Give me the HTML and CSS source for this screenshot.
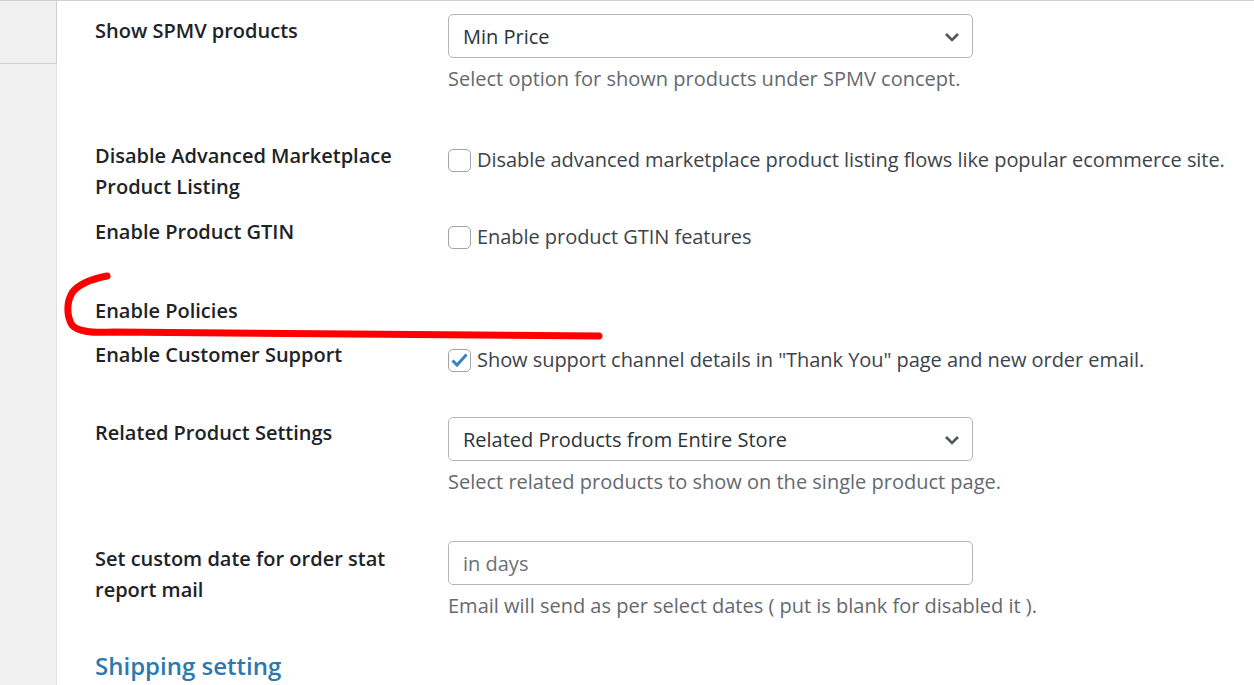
FILE: index.html
```html
<!DOCTYPE html>
<html>
<head>
	<meta charset="utf-8">
	<meta name="viewport" content="width=device-width, initial-scale=1">
	<title>Marketplace settings</title>
	<link rel="stylesheet" href="styles.css">
</head>
<body>
	<div class="page">
		<div class="sidebar">
			<div class="sidebar-tab"></div>
		</div>
		<div class="main">
			<div class="field field-first">
				<div class="field-label label-select">Show SPMV products</div>
				<div class="field-control">
					<div class="select-wrap">
						<select class="select">
							<option>Min Price</option>
						</select>
						<svg class="chevron" width="16" height="10" viewBox="0 0 16 10"><path d="M2 2 L8 8 L14 2" fill="none" stroke="#50575e" stroke-width="2.6"/></svg>
					</div>
					<p class="desc">Select option for shown products under SPMV concept.</p>
				</div>
			</div>

			<div class="field field-wide">
				<div class="field-label label-two">Disable Advanced Marketplace<br>Product Listing</div>
				<div class="field-control control-check">
					<label class="check-row"><span class="check"></span>Disable advanced marketplace product listing flows like popular ecommerce site.</label>
				</div>
			</div>

			<div class="field">
				<div class="field-label">Enable Product GTIN</div>
				<div class="field-control control-check">
					<label class="check-row"><span class="check"></span>Enable product GTIN features</label>
				</div>
			</div>

			<div class="field field-mid">
				<div class="field-label">Enable Policies</div>
				<div class="field-control"></div>
			</div>

			<div class="field field-tight">
				<div class="field-label">Enable Customer Support</div>
				<div class="field-control control-check">
					<label class="check-row"><span class="check is-on"><svg width="19" height="16" viewBox="0 0 19 16"><path d="M2.5 8.5 L7 13 L16.5 2.5" fill="none" stroke="#3582c4" stroke-width="3"/></svg></span>Show support channel details in "Thank You" page and new order email.</label>
				</div>
			</div>

			<div class="field field-after-check">
				<div class="field-label label-select-b">Related Product Settings</div>
				<div class="field-control">
					<div class="select-wrap">
						<select class="select">
							<option>Related Products from Entire Store</option>
						</select>
						<svg class="chevron" width="16" height="10" viewBox="0 0 16 10"><path d="M2 2 L8 8 L14 2" fill="none" stroke="#50575e" stroke-width="2.6"/></svg>
					</div>
					<p class="desc">Select related products to show on the single product page.</p>
				</div>
			</div>

			<div class="field field-last">
				<div class="field-label label-two label-select">Set custom date for order stat<br>report mail</div>
				<div class="field-control">
					<input class="text-input" type="text" placeholder="in days">
					<p class="desc">Email will send as per select dates ( put is blank for disabled it ).</p>
				</div>
			</div>

			<h2 class="section-title">Shipping setting</h2>

			<svg class="scribble" width="1198" height="685" viewBox="57 0 1198 685"><path d="M107 275 C92 278 78 283 72 292 C66 302 67 316 72 324 C78 331 92 332 113 331 L599 335" fill="none" stroke="#ff0000" stroke-width="7" stroke-linecap="round" stroke-linejoin="round"/></svg>
		</div>
	</div>
</body>
</html>
```

FILE: styles.css
```css
		body{
			margin: 0;
			font-family: "Open Sans", "Noto Sans", sans-serif;
			background: #fff;
			overflow: hidden;
		}
		.page{
			display: flex;
			height: 685px;
			border-top: 1px solid #d0d0d0;
			box-sizing: border-box;
		}
		.sidebar{
			width: 56px;
			flex-shrink: 0;
			background: #f0f0f0;
			border-right: 1px solid #e2e2e2;
		}
		.sidebar-tab{
			height: 62px;
			border-bottom: 1px solid #d4d4d4;
			border-right: 1px solid #cfcfcf;
			margin-right: -1px;
		}
		.main{
			position: relative;
			flex: 1;
			padding: 13px 0 0 38px;
		}
		.field{
			display: grid;
			grid-template-columns: 353px 1fr;
			margin-top: 15px;
		}
		.field-first{
			margin-top: 0;
		}
		.field-wide{
			margin-top: 46px;
		}
		.field-mid{
			margin-top: 44px;
		}
		.field-tight{
			margin-top: 14px;
		}
		.field-after-check{
			margin-top: 42px;
		}
		.field-last{
			margin-top: 44px;
		}
		.field-label{
			font-size: 20px;
			font-weight: 600;
			color: #1d2327;
			line-height: 30px;
		}
		.label-two{
			line-height: 31px;
		}
		.label-select{
			padding-top: 2px;
		}
		.label-select-b{
			padding-top: 1px;
		}
		.field-control{
			min-height: 30px;
		}
		.control-check{
			padding-top: 5px;
		}
		.select-wrap{
			position: relative;
			width: 525px;
		}
		.select{
			-webkit-appearance: none;
			appearance: none;
			width: 525px;
			height: 44px;
			border: 1px solid #b4b6b9;
			border-radius: 5px;
			background: #fff;
			padding: 0 14px;
			font-family: inherit;
			font-size: 20px;
			color: #2c3338;
			display: block;
		}
		.chevron{
			position: absolute;
			right: 13px;
			top: 18px;
		}
		.text-input{
			display: block;
			width: 525px;
			height: 44px;
			box-sizing: border-box;
			border: 1px solid #b4b6b9;
			border-radius: 5px;
			padding: 0 14px;
			font-family: inherit;
			font-size: 20px;
			color: #2c3338;
			outline: none;
		}
		.text-input::placeholder{
			color: #6c7076;
		}
		.desc{
			margin: 6px 0 0;
			font-size: 20px;
			line-height: 30px;
			color: #646970;
		}
		.check-row{
			display: flex;
			align-items: center;
			font-size: 20px;
			line-height: 30px;
			color: #3c434a;
			letter-spacing: -0.05px;
		}
		.check{
			width: 23px;
			height: 23px;
			box-sizing: border-box;
			border: 1px solid #a0a3a7;
			border-radius: 5px;
			margin-right: 6px;
			flex-shrink: 0;
			display: flex;
			align-items: center;
			justify-content: center;
		}
		.section-title{
			margin: 29px 0 0;
			font-size: 24px;
			font-weight: 600;
			line-height: 32px;
			color: #2a7ab0;
		}
		.scribble{
			position: absolute;
			left: 0;
			top: 0;
			pointer-events: none;
		}
```
